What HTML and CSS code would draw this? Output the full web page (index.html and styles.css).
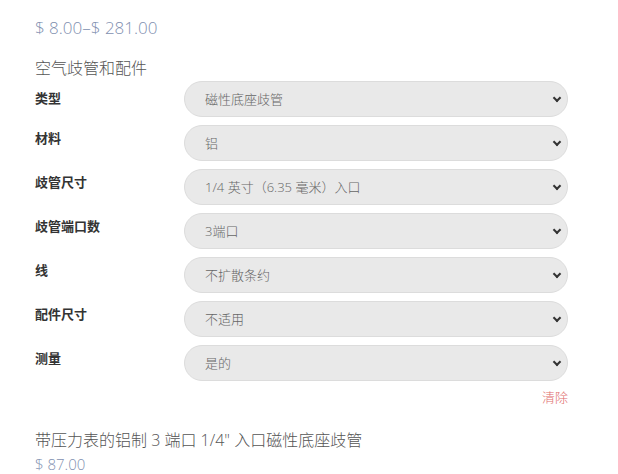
FILE: index.html
```html
<!DOCTYPE html>
<html lang="zh">
<head>
  <meta charset="UTF-8">
  <title>空气歧管和配件</title>
  <link rel="stylesheet" href="styles.css">
</head>
<body>
  <div class="product">
    <p class="price">$ 8.00–$ 281.00</p>
    <h3 class="group-title">空气歧管和配件</h3>

    <form class="variations">
      <div class="row first">
        <label>类型</label>
        <div class="select-wrap">
          <select><option>磁性底座歧管</option></select>
        </div>
      </div>
      <div class="row">
        <label>材料</label>
        <div class="select-wrap">
          <select><option>铝</option></select>
        </div>
      </div>
      <div class="row">
        <label>歧管尺寸</label>
        <div class="select-wrap">
          <select><option>1/4 英寸（6.35 毫米）入口</option></select>
        </div>
      </div>
      <div class="row">
        <label>歧管端口数</label>
        <div class="select-wrap">
          <select><option>3端口</option></select>
        </div>
      </div>
      <div class="row">
        <label>线</label>
        <div class="select-wrap">
          <select><option>不扩散条约</option></select>
        </div>
      </div>
      <div class="row">
        <label>配件尺寸</label>
        <div class="select-wrap">
          <select><option>不适用</option></select>
        </div>
      </div>
      <div class="row">
        <label>测量</label>
        <div class="select-wrap">
          <select><option>是的</option></select>
        </div>
      </div>
      <div class="reset-line">
        <a href="#" class="reset">清除</a>
      </div>
    </form>

    <h3 class="item-title">带压力表的铝制 3 端口 1/4" 入口磁性底座歧管</h3>
    <p class="item-price">$ 87.00</p>
  </div>
</body>
</html>
```

FILE: styles.css
```css
body {
  margin: 0;
  font-family: "Open Sans", "Noto Sans CJK SC", sans-serif;
  color: #555;
  background: #fff;
}
.product {
  width: 533px;
  padding: 17px 0 0 35px;
}
.price {
  margin: 0;
  font-size: 17px;
  font-weight: 300;
  color: #7f90b0;
  line-height: 22px;
}
.group-title {
  margin: 18px 0 0 0;
  font-size: 16px;
  font-weight: 300;
  color: #555;
  line-height: 22px;
}
.variations {
  margin-top: 2px;
}
.row {
  display: flex;
  margin-bottom: 8px;
}
.row label {
  width: 149px;
  font-size: 13px;
  font-weight: bold;
  color: #333;
  padding-top: 4px;
  line-height: 18px;
}
.row.first label {
  padding-top: 8px;
}
.select-wrap {
  position: relative;
  flex: 1;
}
.select-wrap::after {
  content: "";
  position: absolute;
  right: 8px;
  top: 14px;
  width: 4px;
  height: 4px;
  border-right: 2px solid #333;
  border-bottom: 2px solid #333;
  transform: rotate(45deg);
  pointer-events: none;
}
select {
  appearance: none;
  -webkit-appearance: none;
  width: 100%;
  height: 36px;
  padding: 0 30px 0 20px;
  border: 1px solid #dcdcdc;
  border-radius: 18px;
  background: #e9e9e9;
  font-family: "Open Sans", "Noto Sans CJK SC", sans-serif;
  font-size: 13px;
  font-weight: 300;
  color: #666;
}
.reset-line {
  text-align: right;
  margin-top: -4px;
}
.reset {
  font-size: 13px;
  color: #e06b6b;
  text-decoration: none;
  font-weight: 300;
}
.item-title {
  margin: 21px 0 0 0;
  font-size: 16px;
  font-weight: 300;
  color: #555;
  line-height: 24px;
}
.item-price {
  margin: 0;
  font-size: 15px;
  font-weight: 300;
  color: #7f90b0;
  line-height: 24px;
}
```
